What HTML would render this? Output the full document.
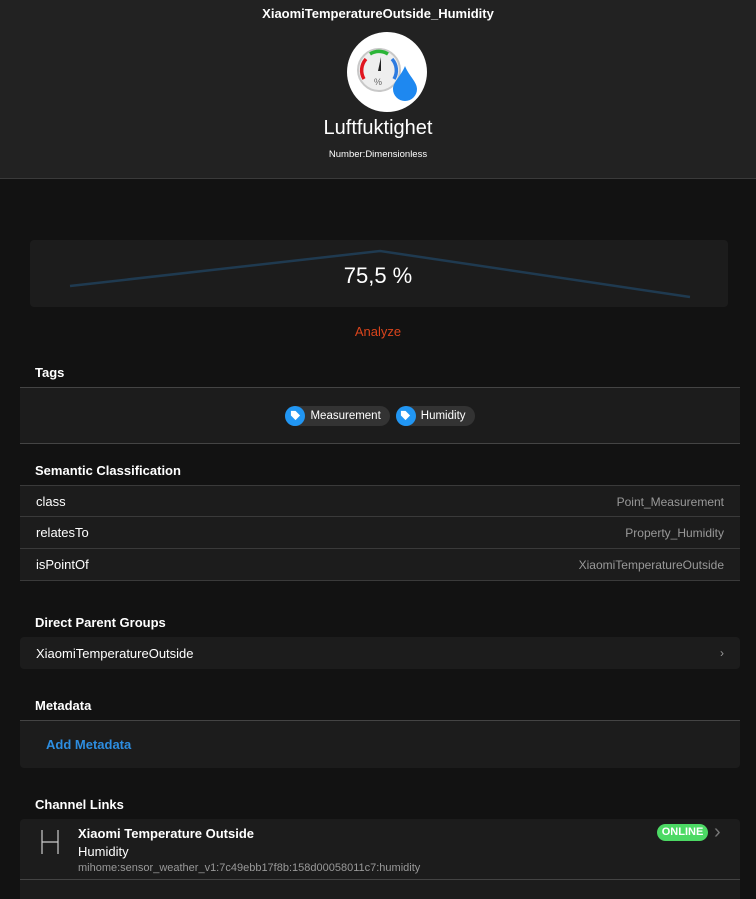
<!DOCTYPE html>
<html><head><meta charset="utf-8"><style>
*{margin:0;padding:0;box-sizing:border-box}
body{width:756px;height:894px;background:#121212;font-family:"Liberation Sans",sans-serif;color:#fff;position:relative;overflow:hidden;font-size:13px}
.a{position:absolute}
.hdr{left:0;top:0;width:756px;height:179px;background:#222;border-bottom:1px solid #3a3a3a}
.h{left:35px;font-weight:bold;font-size:13px}
.card{left:20px;width:720px;background:#1c1c1c}
.row{left:20px;width:720px;height:32px;border-top:1px solid #3a3a3a;background:#1c1c1c;padding:0 16px;display:flex;justify-content:space-between;align-items:center;font-size:13px}
.row span:last-child{color:#999;font-size:12px}
.chip{display:inline-flex;align-items:center;height:20px;background:#333;border-radius:10px;padding-right:9px;font-size:11.5px;margin:0 3px}
.chip i{width:20px;height:20px;border-radius:50%;background:#2196f3;margin-right:5px;display:flex;align-items:center;justify-content:center}
.chev{color:#777;font-size:20px;line-height:20px}
</style></head><body>
<div class="a hdr"></div>
<div class="a" style="left:0;width:756px;top:6px;text-align:center;font-weight:bold;font-size:13px">XiaomiTemperatureOutside_Humidity</div>
<div class="a" style="left:347px;top:32px;width:80px;height:80px;border-radius:50%;background:#fff"></div>
<svg class="a" style="left:347px;top:32px" width="80" height="80" viewBox="0 0 80 80">
<circle cx="32" cy="38" r="21" fill="#eee" stroke="#c8c8c8" stroke-width="2"/>
<path d="M17 47 A17 17 0 0 1 19 27" stroke="#e0141e" stroke-width="3.5" fill="none"/>
<path d="M23 22 A17 17 0 0 1 41 22" stroke="#2bb537" stroke-width="3.5" fill="none"/>
<path d="M45 27 A17 17 0 0 1 47 47" stroke="#2d7be0" stroke-width="3.5" fill="none"/>
<path d="M31 39 L34 25 L34 39 Z" fill="#222"/>
<text x="27" y="53" font-size="9" fill="#666" font-family="Liberation Sans">%</text>
<path d="M58 34 C54 44 46 50 46 57 A12 12 0 0 0 70 57 C70 50 62 44 58 34 Z" fill="#1e88f0"/>
</svg>
<div class="a" style="left:0;width:756px;top:117px;text-align:center;font-size:20px">Luftfuktighet</div>
<div class="a" style="left:0;width:756px;top:149px;text-align:center;font-size:9.5px">Number:Dimensionless</div>

<div class="a" style="left:30px;top:240px;width:698px;height:67px;background:#1c1c1c;border-radius:4px"></div>
<svg class="a" style="left:0;top:240px" width="756" height="70"><polyline points="70,46 380,11 690,57" fill="none" stroke="#1f3a50" stroke-width="2.5"/></svg>
<div class="a" style="left:0;width:756px;top:263px;text-align:center;font-size:22px">75,5 %</div>
<div class="a" style="left:0;width:756px;top:324px;text-align:center;font-size:13px;color:#d9441c">Analyze</div>

<div class="a h" style="top:365px">Tags</div>
<div class="a card" style="top:387px;height:57px;border-top:1px solid #444;border-bottom:1px solid #444;display:flex;justify-content:center;align-items:center">
<span class="chip"><i><svg width="11" height="11" viewBox="0 0 12 12"><path d="M1 1h5l5 5-5 5-5-5z" fill="#fff"/></svg></i>Measurement</span>
<span class="chip"><i><svg width="11" height="11" viewBox="0 0 12 12"><path d="M1 1h5l5 5-5 5-5-5z" fill="#fff"/></svg></i>Humidity</span>
</div>

<div class="a h" style="top:463px">Semantic Classification</div>
<div class="a row" style="top:485px"><span>class</span><span>Point_Measurement</span></div>
<div class="a row" style="top:516px"><span>relatesTo</span><span>Property_Humidity</span></div>
<div class="a row" style="top:548px;border-bottom:1px solid #3a3a3a;height:33px"><span>isPointOf</span><span>XiaomiTemperatureOutside</span></div>

<div class="a h" style="top:615px">Direct Parent Groups</div>
<div class="a row" style="top:637px;border-top:none;border-radius:4px"><span>XiaomiTemperatureOutside</span><span class="chev">›</span></div>

<div class="a h" style="top:698px">Metadata</div>
<div class="a card" style="top:720px;height:48px;border-top:1px solid #444;border-radius:0 0 4px 4px"></div>
<div class="a" style="left:46px;top:737px;color:#2d8de0;font-weight:bold">Add Metadata</div>

<div class="a h" style="top:797px">Channel Links</div>
<div class="a card" style="top:819px;height:80px;border-radius:4px 4px 0 0"></div>
<div class="a" style="left:20px;top:879px;width:720px;border-top:1px solid #444"></div>
<svg class="a" style="left:40px;top:829px" width="20" height="26"><path d="M2 1V25M18 1V25M2 13H18" stroke="#ccc" stroke-width="1.2" fill="none"/></svg>
<div class="a" style="left:78px;top:826px;font-weight:bold">Xiaomi Temperature Outside</div>
<div class="a" style="left:78px;top:844px">Humidity</div>
<div class="a" style="left:78px;top:862px;font-size:11px;color:#999">mihome:sensor_weather_v1:7c49ebb17f8b:158d00058011c7:humidity</div>
<div class="a" style="left:657px;top:824px;width:51px;height:17px;border-radius:9px;background:#4cd964;color:#fff;font-weight:bold;font-size:11px;text-align:center;line-height:17px">ONLINE</div>
<div class="a chev" style="left:714px;top:822px">›</div>
</body></html>
